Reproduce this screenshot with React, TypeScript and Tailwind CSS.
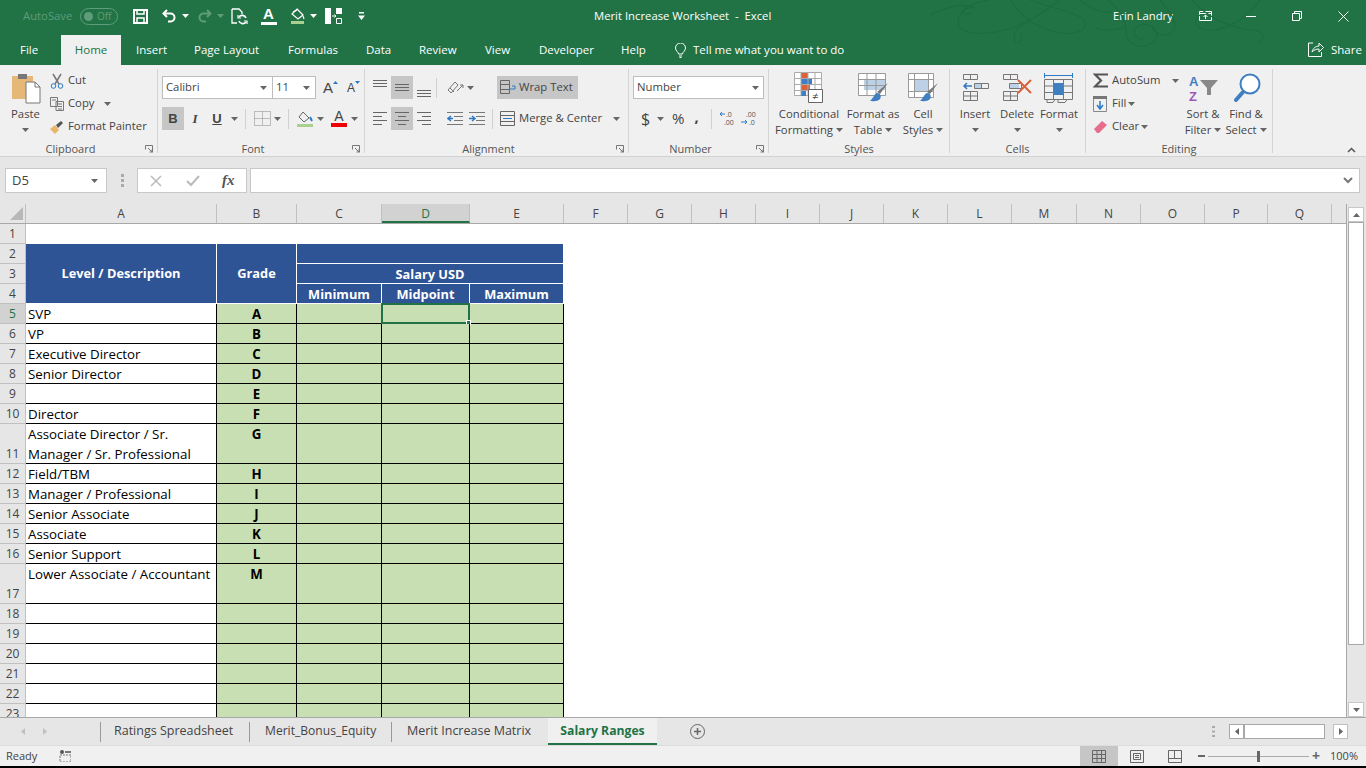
import type { ReactNode } from 'react';

const Chev = ({ c = '#666', className = '' }: { c?: string; className?: string }) => (
  <svg width="7" height="4" viewBox="0 0 7 4" className={className}><path d="M0 0h7L3.500 4z" fill={c} /></svg>
);

function Swirls() {
  return (
    <svg className="absolute left-[930px] top-0 pointer-events-none" width="340" height="65" viewBox="0 0 340 65" fill="none" stroke="#1d6c40" strokeWidth="1.200">
      <path d="M0 15C15 8 30 2 45 8C32 5 28 18 42 13" />
      <path d="M60 0C40 2 28 12 28 22C28 34 50 36 75 30C95 25 112 14 130 0" />
      <path d="M100 0C120 8 150 12 155 22C158 32 140 36 125 32C105 26 95 20 80 0" />
      <path d="M100 22C88 26 80 34 86 42C92 44 94 36 90 33" />
      <path d="M178 0C190 10 196 20 196 32C196 46 215 52 225 40C232 30 218 20 208 26C200 32 208 42 215 38" />
      <path d="M165 28C175 32 190 30 196 26" />
      <path d="M230 0C240 12 250 24 242 32C236 38 226 34 222 28" />
      <path d="M330 0C320 15 300 30 280 30C265 30 262 20 270 15" />
      <path d="M262 0C275 15 300 30 325 30C335 32 335 42 328 42" />
      <path d="M150 0C160 8 170 14 182 12" />
    </svg>
  );
}

function TitleBar() {
  return (
    <div className="h-[32px] flex items-center text-white relative text-[11.300px] whitespace-nowrap">
      <Swirls />
      <span className="ml-[23px] w-[49px] text-[#5f9c7b]">AutoSave</span>
      <span className="ml-[8px] w-[38px] h-[17px] rounded-full border border-[#5f9c7b] flex items-center px-[3px] gap-[4px]">
        <span className="w-[9px] h-[9px] rounded-full bg-[#5f9c7b]" />
        <span className="text-[10px] text-[#5f9c7b] leading-none">Off</span>
      </span>
      {/* save */}
      <svg className="ml-[15px]" width="15" height="15" viewBox="0 0 15 15" fill="none" stroke="#fff" strokeWidth="2"><path d="M1 1h13v13H1z" /><path d="M4 1v4h7V1M4 14V9h7v5" strokeWidth="1.500" /></svg>
      {/* undo */}
      <svg className="ml-[14px]" width="15" height="14" viewBox="0 0 15 14" fill="none" stroke="#fff" strokeWidth="2"><path d="M5 1 1.500 4.500 5 8" /><path d="M2 4.500h6.500a4 4 0 0 1 0 8H6" /></svg>
      <Chev c="#fff" className="ml-[5px]" />
      <svg className="ml-[9px]" width="14" height="14" viewBox="0 0 14 14" fill="none" stroke="#5f9c7b" strokeWidth="2"><path d="M9 1l3.500 3.500L9 8" /><path d="M12 4.500H5.500a4 4 0 0 0 0 8H8" /></svg>
      <Chev c="#5f9c7b" className="ml-[5px]" />
      {/* touch doc */}
      <svg className="ml-[7px]" width="17" height="17" viewBox="0 0 17 17" fill="none" stroke="#fff" strokeWidth="1.300"><path d="M1 1h7l3 3v2M1 1v14h5" /><path d="M15 10a4 4 0 0 0-7-1M8 13a4 4 0 0 0 7 1" strokeWidth="1.600" /><path d="M7 7v3h3M16 16v-3h-3" strokeWidth="1.200" /></svg>
      {/* font colour */}
      <span className="ml-[12px] w-[17px] flex flex-col items-center">
        <span className="text-[15px] leading-[13px] font-bold font-['Liberation_Sans',sans-serif]">A</span>
        <span className="w-[16px] h-[3px] bg-white mt-[2px]" />
      </span>
      {/* fill */}
      <svg className="ml-[13px]" width="16" height="16" viewBox="0 0 16 16" fill="none" stroke="#fff" strokeWidth="1.200"><path d="M7 1l6 6-5 4-6-5z" /><path d="M3 4l4-2M13 8l1 3" /><path d="M1 13h13v3H1z" fill="#a9d08e" stroke="none" /></svg>
      <Chev c="#fff" className="ml-[4px]" />
      {/* col width */}
      <svg className="ml-[8px]" width="17" height="16" viewBox="0 0 17 16"><path d="M0 0h6v16H0zM11 0h6v6h-6z" fill="#fff" /><path d="M11.500 10.500h5v5h-5z" fill="none" stroke="#fff" /><path d="M7 8h4M9.500 6.500 11 8 9.500 9.500" stroke="#fff" fill="none" /></svg>
      <svg className="ml-[16px]" width="7" height="8" viewBox="0 0 7 8"><path d="M1 0h5v1.500H1zM0 3.500h7L3.500 8z" fill="#fff" /></svg>
      <span className="ml-[229px] w-[176px] whitespace-pre">Merit Increase Worksheet  -  Excel</span>
      <span className="ml-[343px] w-[59px]">Erin Landry</span>
      <svg className="ml-[27px]" width="13" height="10" viewBox="0 0 13 10" fill="none" stroke="#fff"><path d="M.5.500h12v9H.5zM.5 2.500h12M6.500 8V4M4.500 6l2-2 2 2" /></svg>
      <span className="ml-[34px] w-[10px] h-px bg-white" />
      <svg className="ml-[36px]" width="10" height="10" viewBox="0 0 10 10" fill="none" stroke="#fff"><path d="M.5 2.500h7v7h-7zM2.500 2.500V.500h7v7h-2" /></svg>
      <svg className="ml-[36px]" width="11" height="11" viewBox="0 0 11 11" stroke="#fff"><path d="M.5.500l10 10M10.500.500l-10 10" /></svg>
    </div>
  );
}

function MenuRow() {
  return (
    <div className="h-[33px] flex items-end text-white text-[11.500px] relative whitespace-nowrap">
      <span className="ml-[20px] h-[24px] w-[18px]">File</span>
      <span className="ml-[23px] w-[60px] h-[30px] bg-[#f0f0f0] text-[#217346] text-center pt-[6px]">Home</span>
      <span className="ml-[15px] h-[24px] w-[29px]">Insert</span>
      <span className="ml-[29px] h-[24px] w-[65px]">Page Layout</span>
      <span className="ml-[29px] h-[24px] w-[49px]">Formulas</span>
      <span className="ml-[29px] h-[24px] w-[24px]">Data</span>
      <span className="ml-[29px] h-[24px] w-[37px]">Review</span>
      <span className="ml-[29px] h-[24px] w-[25px]">View</span>
      <span className="ml-[29px] h-[24px] w-[53px]">Developer</span>
      <span className="ml-[29px] h-[24px] w-[25px]">Help</span>
      <svg className="ml-[29px] mb-[7px]" width="11" height="15" viewBox="0 0 11 15" fill="none" stroke="#fff"><path d="M3.500 11c0-2-3-3-3-6a5 5 0 0 1 10 0c0 3-3 4-3 6zM4 13h3M4.500 14.500h2" /></svg>
      <span className="ml-[7px] h-[24px] w-[151px]">Tell me what you want to do</span>
      <svg className="ml-[464px] mb-[8px]" width="16" height="15" viewBox="0 0 16 15" fill="none" stroke="#fff"><path d="M5 1H.5v13.500h13V10" /><path d="M4 10c1-4 4-6 7-6V1l4.500 4.500L11 10V7c-3 0-5 1-7 3z" /></svg>
      <span className="ml-[7px] h-[24px]">Share</span>
    </div>
  );
}

function Group({ w, label, launcher, children }: { w: string; label: string; launcher?: boolean; children: ReactNode }) {
  return (
    <div className={`${w} flex flex-col h-[84px] mt-[4px] border-r border-[#d4d4d4] relative`}>
      <div className="h-[73px] flex">{children}</div>
      <div className={`text-[11px] h-[11px] leading-[14px] text-[#555] text-center ${launcher ? 'pr-[16px]' : ''}`}>{label}</div>
      {launcher && (
        <svg className="absolute right-[4px] bottom-0" width="8" height="8" viewBox="0 0 8 8" fill="none" stroke="#777"><path d="M.5.500h7v7M.5.500v4M3 3l4 4M4.500 7h2.500V4.500" /></svg>
      )}
    </div>
  );
}

function BigBtn({ w, icon, l1, l2, ml = '' }: { w: string; icon: ReactNode; l1: string; l2?: string; ml?: string }) {
  return (
    <div className={`${w} ${ml} flex flex-col items-center text-[11.300px] leading-[16px] text-[#444] whitespace-nowrap`}>
      <div className="h-[37px] flex items-center">{icon}</div>
      <span>{l1}</span>
      <span className="flex items-center gap-[3px] h-[15px]">{l2}<Chev /></span>
    </div>
  );
}

const PasteIcon = () => (
  <svg width="30" height="32" viewBox="0 0 30 32">
    <path d="M1 4h21v23H1z" fill="#e6b877" />
    <path d="M7 2h9v5H7z" fill="#777" />
    <path d="M15 10h9l5 5v16H15z" fill="#fff" stroke="#777" />
    <path d="M24 10v5h5" fill="none" stroke="#777" />
  </svg>
);

const AlignLines = ({ kind }: { kind: 'top' | 'mid' | 'bot' | 'l' | 'c' | 'r' }) => {
  const v = kind === 'top' ? [1, 4, 7] : kind === 'mid' ? [5, 8, 11] : kind === 'bot' ? [11, 14, 17] : null;
  if (v) {
    return (
      <svg width="14" height="18" viewBox="0 0 14 18" stroke="#666">
        {v.map((y) => <path key={y} d={`M0 ${y + 0.5}h14`} />)}
      </svg>
    );
  }
  const rows: [number, number][] = kind === 'l' ? [[0, 14], [0, 9], [0, 14], [0, 9]] : kind === 'c' ? [[0, 14], [3, 8], [0, 14], [3, 8]] : [[0, 14], [5, 9], [0, 14], [5, 9]];
  return (
    <svg width="14" height="13" viewBox="0 0 14 13" stroke="#666">
      {rows.map(([x, w], i) => <path key={i} d={`M${x} ${i * 4 + 0.5}h${w}`} />)}
    </svg>
  );
};

const Indent = ({ flip }: { flip?: boolean }) => (
  <svg width="16" height="13" viewBox="0 0 16 13" fill="none">
    <path d="M0 .5h16M7 4.500h9M7 8.500h9M0 12.500h16" stroke="#777" />
    <path d={flip ? 'M0 6.500h5M3 4l3 2.500L3 9' : 'M1 6.500h5M4 4 1 6.500 4 9'} stroke="#2b79c2" strokeWidth="1.500" />
  </svg>
);

function Ribbon() {
  return (
    <div className="h-[92px] bg-[#f0f0f0] border-b border-[#d2d2d2] flex relative">
      <Group w="w-[158px]" label="Clipboard" launcher>
        <div className="ml-[11px] w-[29px] flex flex-col items-center text-[11.300px] leading-[16px] text-[#444]">
          <div className="h-[37px] pt-[3px]"><PasteIcon /></div>
          <span>Paste</span>
          <span className="h-[15px] flex items-center"><Chev /></span>
        </div>
        <div className="ml-[10px] flex flex-col text-[11.300px] text-[#444] whitespace-nowrap">
          <div className="h-[23px] flex items-center">
            <svg width="14" height="16" viewBox="0 0 14 16" fill="none"><path d="M3 1l6 10M11 1 5 11" stroke="#777" strokeWidth="1.500" /><circle cx="3.500" cy="13" r="2.300" stroke="#2b79c2" /><circle cx="10.500" cy="13" r="2.300" stroke="#2b79c2" /></svg>
            <span className="ml-[4px]">Cut</span>
          </div>
          <div className="h-[23px] flex items-center">
            <svg width="14" height="14" viewBox="0 0 14 14" fill="none" stroke="#777"><path d="M.5.500h7v9h-7zM6 4.500h7.500v9H6zM2 3h4M8 7h4M8 9.500h4M8 12h4" /></svg>
            <span className="ml-[4px]">Copy</span>
            <Chev className="ml-[10px]" />
          </div>
          <div className="h-[23px] flex items-center">
            <svg width="14" height="14" viewBox="0 0 14 14"><path d="M0 9l5-4 4 5-4 4z" fill="#e9b568" /><path d="M6 5l5-4 2 2-5 5z" fill="#555" /></svg>
            <span className="ml-[4px]">Format Painter</span>
          </div>
        </div>
      </Group>

      <Group w="w-[207px]" label="Font" launcher>
        <div className="ml-[4px] flex flex-col pt-[7px] text-[#444] text-[11.300px]">
          <div className="h-[23px] flex items-center">
            <div className="w-[111px] h-[23px] bg-white border border-[#bdbdbd] flex items-center justify-between px-[3px] pr-[5px]">Calibri<Chev /></div>
            <div className="w-[43px] h-[23px] bg-white border border-l-0 border-[#bdbdbd] flex items-center justify-between px-[3px] pr-[5px]">11<Chev /></div>
            <span className="ml-[7px] text-[15px] font-['Liberation_Sans',sans-serif] leading-none">A</span>
            <svg className="mb-[10px]" width="5" height="3" viewBox="0 0 5 3"><path d="M0 3h5L2.500 0z" fill="#2b79c2" /></svg>
            <span className="ml-[9px] text-[12px] font-['Liberation_Sans',sans-serif] leading-none">A</span>
            <svg className="mb-[10px]" width="5" height="3" viewBox="0 0 5 3"><path d="M0 0h5L2.500 3z" fill="#2b79c2" /></svg>
          </div>
          <div className="h-[23px] mt-[8px] flex items-center font-['Liberation_Sans',sans-serif]">
            <span className="w-[22px] h-[23px] bg-[#c6c6c6] flex items-center justify-center font-bold text-[13px]">B</span>
            <span className="w-[22px] text-center italic font-bold text-[13px] font-['Liberation_Serif',serif]">I</span>
            <span className="w-[22px] text-center underline font-bold text-[13px]">U</span>
            <Chev className="ml-[3px]" />
            <span className="ml-[7px] w-px h-[20px] bg-[#d0d0d0]" />
            <svg className="ml-[8px]" width="17" height="15" viewBox="0 0 17 15" fill="none" stroke="#888" strokeDasharray="1 1"><path d="M.5.500h16v14H.5zM.5 7.500h16M8.500.500v14" /></svg>
            <Chev className="ml-[3px]" />
            <span className="ml-[7px] w-px h-[20px] bg-[#d0d0d0]" />
            <svg className="ml-[8px]" width="16" height="16" viewBox="0 0 16 16" fill="none"><path d="M6 1l6 6-5 4-5-5z" stroke="#666" /><path d="M13 6l2 4" stroke="#2b79c2" strokeWidth="2" /><path d="M0 13h16v3H0z" fill="#a9d08e" /></svg>
            <Chev className="ml-[4px]" />
            <span className="ml-[7px] w-[16px] flex flex-col items-center">
              <span className="text-[14px] leading-[12px]">A</span>
              <span className="w-[16px] h-[4px] bg-[#e00] mt-[1px]" />
            </span>
            <Chev className="ml-[4px]" />
          </div>
        </div>
      </Group>

      <Group w="w-[264px]" label="Alignment" launcher>
        <div className="ml-[4px] flex flex-col pt-[7px] text-[#444] text-[11.300px] whitespace-nowrap">
          <div className="h-[23px] flex items-center">
            <span className="ml-[4px] w-[14px] flex"><AlignLines kind="top" /></span>
            <span className="ml-[4px] w-[22px] h-[23px] bg-[#c6c6c6] flex items-center justify-center"><AlignLines kind="mid" /></span>
            <span className="ml-[4px] w-[14px] flex"><AlignLines kind="bot" /></span>
            <span className="ml-[5px] w-px h-[20px] bg-[#d0d0d0]" />
            <svg className="ml-[10px]" width="17" height="15" viewBox="0 0 17 15" fill="none" stroke="#777"><path d="M1 10 8 2l3 3-7 8zM10 11l6-6M13 5h3v3" /><path d="M3 8l4 4" /></svg>
            <Chev className="ml-[3px]" />
            <span className="ml-[23px] w-[81px] h-[23px] bg-[#c6c6c6] flex items-center pl-[3px] gap-[3px]">
              <svg width="16" height="15" viewBox="0 0 16 15" fill="none" stroke="#666"><path d="M.5.500h9v4h-9zM.5 4.500h9v5h-9zM.5 9.500h9v4h-9z" /><path d="M12 6h3v3h-6" stroke="#2b79c2" /></svg>
              Wrap Text
            </span>
          </div>
          <div className="h-[23px] mt-[8px] flex items-center">
            <span className="ml-[4px] w-[14px] flex"><AlignLines kind="l" /></span>
            <span className="ml-[4px] w-[22px] h-[23px] bg-[#c6c6c6] flex items-center justify-center"><AlignLines kind="c" /></span>
            <span className="ml-[4px] w-[14px] flex"><AlignLines kind="r" /></span>
            <span className="ml-[16px] flex"><Indent /></span>
            <span className="ml-[6px] flex"><Indent flip /></span>
            <span className="ml-[7px] w-px h-[20px] bg-[#d0d0d0]" />
            <svg className="ml-[7px]" width="15" height="15" viewBox="0 0 15 15" fill="none" stroke="#666"><path d="M.5.500h14v14H.5zM.5 4.500h14M.5 10.500h14" /><path d="M3 7.500h9" stroke="#2b79c2" /></svg>
            <span className="ml-[4px] w-[85px]">Merge &amp; Center</span>
            <Chev className="ml-[9px]" />
          </div>
        </div>
      </Group>

      <Group w="w-[140px]" label="Number" launcher>
        <div className="ml-[4px] flex flex-col pt-[7px] text-[#444] text-[11.300px]">
          <div className="w-[131px] h-[23px] bg-white border border-[#bdbdbd] flex items-center justify-between px-[3px] pr-[4px]">Number<Chev /></div>
          <div className="h-[23px] mt-[8px] flex items-center">
            <span className="ml-[8px] text-[16px] w-[9px]">$</span>
            <Chev className="ml-[7px]" />
            <span className="ml-[8px] text-[15px]">%</span>
            <span className="ml-[10px] text-[15px] font-bold leading-none mb-[4px]">,</span>
            <span className="ml-[12px] w-px h-[20px] bg-[#d0d0d0]" />
            <svg className="ml-[8px]" width="16" height="17" viewBox="0 0 16 17"><text x="6" y="7" fontSize="7" fill="#555">.0</text><text x="4" y="15" fontSize="7" fill="#555">.00</text><path d="M0 4h5M2 2 0 4l2 2" stroke="#2b79c2" fill="none" /></svg>
            <svg className="ml-[5px]" width="16" height="17" viewBox="0 0 16 17"><text x="5" y="7" fontSize="7" fill="#555">.00</text><text x="8" y="15" fontSize="7" fill="#555">.0</text><path d="M0 12h6M4 10l2 2-2 2" stroke="#2b79c2" fill="none" /></svg>
          </div>
        </div>
      </Group>

      <Group w="w-[181px]" label="Styles">
        <BigBtn w="w-[80px]" l1="Conditional" l2="Formatting" icon={
          <svg width="30" height="32" viewBox="0 0 30 32">
            <path d="M.5.500h27v23H.5z" fill="#fff" stroke="#aaa" />
            <path d="M7 1h7v5H7z" fill="#d9623a" /><path d="M7 7h11v5H7z" fill="#3f7fc1" /><path d="M7 13h9v5H7z" fill="#d9623a" /><path d="M7 19h5v5H7z" fill="#3f7fc1" />
            <path d="M7 .5v23M14 .5v23M21 .5v23M.5 6.500h27M.5 12.500h27M.5 18.500h27" stroke="#aaa" fill="none" />
            <path d="M14.500 17.500h14v13h-14z" fill="#fff" stroke="#666" />
            <text x="18" y="28" fontSize="11" fill="#444">≠</text>
          </svg>
        } />
        <BigBtn w="w-[48px]" l1="Format as" l2="Table" icon={
          <svg width="31" height="30" viewBox="0 0 31 30" fill="none">
            <path d="M.5.500h27v22H.5z" stroke="#999" fill="#fff" /><path d="M6 6h21v11H6z" fill="#bcd0e6" />
            <path d="M9 .5v22M18 .5v22M.5 6.500h27M.5 12.500h27" stroke="#999" />
            <path d="M30 10 22 21l-3-2z" fill="#777" /><path d="M19 20c3 0 5 3 3 6s-8 2-10 2c3-2 4-7 7-8z" fill="#3f7fc1" />
          </svg>
        } />
        <BigBtn w="w-[50px]" ml="ml-[1px]" l1="Cell" l2="Styles" icon={
          <svg width="31" height="30" viewBox="0 0 31 30" fill="none">
            <path d="M.5.500h25v24H.5z" stroke="#999" fill="#fff" /><path d="M6 6h14v12H6z" fill="#bcd0e6" />
            <path d="M.5 6.500h25M6.500.500v24M20.500.500v24M.5 18.500h25" stroke="#999" />
            <path d="M30 10 22 21l-3-2z" fill="#777" /><path d="M19 20c3 0 5 3 3 6s-8 2-10 2c3-2 4-7 7-8z" fill="#3f7fc1" />
          </svg>
        } />
      </Group>

      <Group w="w-[136px]" label="Cells">
        <BigBtn w="w-[42px]" ml="ml-[4px]" l1="Insert" icon={
          <svg width="27" height="28" viewBox="0 0 27 28" fill="none" stroke="#777">
            <path d="M1.500.500h14v5h-14zM8.500.500v5M1.500 17.500h14v9h-14zM1.500 22h14M8.500 17.500v9" />
            <path d="M12.500 9.500h14v5h-14zM19.500 9.500v5" /><path d="M13 10h6v4h-6z" fill="#bcd0e6" stroke="none" />
            <path d="M2 12h8M5 9l-3 3 3 3" stroke="#2b79c2" strokeWidth="1.500" />
          </svg>
        } />
        <BigBtn w="w-[42px]" l1="Delete" icon={
          <svg width="30" height="28" viewBox="0 0 30 28" fill="none" stroke="#777">
            <path d="M1.500.500h14v5h-14zM8.500.500v5M1.500 17.500h14v9h-14zM1.500 22h14M8.500 17.500v9M7.500 9.500h12v5h-12z" />
            <path d="M8 10h9v4H8z" fill="#bcd0e6" stroke="none" />
            <path d="M16 6l13 13M29 6 16 19" stroke="#d9623a" strokeWidth="2" />
          </svg>
        } />
        <BigBtn w="w-[42px]" l1="Format" icon={
          <svg width="30" height="32" viewBox="0 0 30 32" fill="none" stroke="#777">
            <path d="M.5 1v5M28.500 1v5M1 3.500h27" stroke="#2b79c2" />
            <path d="M.5 7.500h28v20H.5zM.5 14h28M.5 20.500h28M9.500 7.500v20M19.500 7.500v20" />
            <path d="M10 11h9v12h-9z" fill="#3f7fc1" stroke="none" />
            <path d="M3 27.500v3h6l2-3M14 27.500v3h7l2-3" />
          </svg>
        } />
      </Group>

      <Group w="w-[187px]" label="Editing">
        <div className="ml-[7px] w-[88px] flex flex-col text-[11.300px] text-[#444] whitespace-nowrap">
          <div className="h-[23px] flex items-center">
            <svg width="15" height="15" viewBox="0 0 15 15" fill="none" stroke="#555" strokeWidth="2.200"><path d="M15 1.500H2L8 7.500 2 13.500h13" /></svg>
            <span className="ml-[4px] w-[50px]">AutoSum</span>
            <Chev className="ml-[10px]" />
          </div>
          <div className="h-[23px] flex items-center">
            <svg width="15" height="16" viewBox="0 0 15 16" fill="none"><path d="M.5 2.500h13v13H.5z" stroke="#888" /><path d="M0 0h14v3H0z" fill="#777" /><path d="M7 5v8M4 9l3 4 3-4" stroke="#2b79c2" strokeWidth="1.500" /></svg>
            <span className="ml-[4px]">Fill</span>
            <Chev className="ml-[2px]" />
          </div>
          <div className="h-[23px] flex items-center">
            <svg width="15" height="14" viewBox="0 0 15 14"><path d="M1 9 9 1l5 4-8 8H4z" fill="#e86c8d" /></svg>
            <span className="ml-[4px]">Clear</span>
            <Chev className="ml-[2px]" />
          </div>
        </div>
        <BigBtn w="w-[44px]" l1="Sort &" l2="Filter" icon={
          <svg width="31" height="30" viewBox="0 0 31 30">
            <text x="1" y="13" fontSize="13" fontWeight="bold" fill="#3f7fc1" fontFamily="Liberation Sans">A</text>
            <text x="1" y="28" fontSize="13" fontWeight="bold" fill="#9b59b6" fontFamily="Liberation Sans">Z</text>
            <path d="M12 7h18l-7 8v7h-4v-7z" fill="#888" />
          </svg>
        } />
        <BigBtn w="w-[42px]" l1="Find &" l2="Select" icon={
          <svg width="28" height="30" viewBox="0 0 28 30" fill="none" className="ml-[2px]">
            <circle cx="17" cy="11" r="9.500" stroke="#3f7fc1" strokeWidth="2" fill="#fff" />
            <path d="M10 19 3 27" stroke="#3f7fc1" strokeWidth="4" strokeLinecap="round" />
          </svg>
        } />
      </Group>

      <svg className="absolute right-[10px] bottom-[3px]" width="9" height="6" viewBox="0 0 9 6" fill="none" stroke="#555" strokeWidth="1.500"><path d="M1 5l3.500-3.500L8 5" /></svg>
    </div>
  );
}

function FormulaBar() {
  return (
    <div className="h-[47px] bg-[#e6e6e6] flex items-start pt-[11px] text-[#444]">
      <div className="ml-[5px] w-[102px] h-[25px] bg-white border border-[#c8c8c8] flex items-center justify-between px-[6px] text-[13px]">
        D5<Chev className="mr-[2px]" />
      </div>
      <svg className="ml-[14px] mt-[6px]" width="3" height="13" viewBox="0 0 3 13" fill="#aaa"><path d="M0 0h3v3H0zM0 5h3v3H0zM0 10h3v3H0z" /></svg>
      <div className="ml-[13px] w-[110px] h-[25px] bg-white border border-[#c8c8c8] flex items-center">
        <svg className="ml-[12px]" width="12" height="12" viewBox="0 0 12 12" stroke="#bbb" strokeWidth="1.500"><path d="M1 1l10 10M11 1 1 11" /></svg>
        <svg className="ml-[24px]" width="14" height="12" viewBox="0 0 14 12" fill="none" stroke="#bbb" strokeWidth="2"><path d="M1 6l4 4 8-9" /></svg>
        <span className="ml-[22px] text-[15px] italic font-bold font-['Liberation_Serif',serif] text-[#555]">fx</span>
      </div>
      <div className="ml-[3px] w-[1110px] h-[25px] bg-white border border-[#c8c8c8] flex items-center justify-end pr-[6px]">
        <svg width="10" height="7" viewBox="0 0 10 7" fill="none" stroke="#777" strokeWidth="2"><path d="M1 1l4 4 4-4" /></svg>
      </div>
    </div>
  );
}

const COLS = [
  ['A', 'w-[191px]'], ['B', 'w-[80px]'], ['C', 'w-[85px]'], ['D', 'w-[88px]'], ['E', 'w-[94px]'],
  ['F', 'w-[64px]'], ['G', 'w-[64px]'], ['H', 'w-[64px]'], ['I', 'w-[64px]'], ['J', 'w-[64px]'],
  ['K', 'w-[64px]'], ['L', 'w-[64px]'], ['M', 'w-[65px]'], ['N', 'w-[64px]'], ['O', 'w-[64px]'],
  ['P', 'w-[63px]'], ['Q', 'w-[64px]'],
];

const ROWS: { n: number; label?: string; grade?: string; tall?: boolean }[] = [
  { n: 5, label: 'SVP', grade: 'A' },
  { n: 6, label: 'VP', grade: 'B' },
  { n: 7, label: 'Executive Director', grade: 'C' },
  { n: 8, label: 'Senior Director', grade: 'D' },
  { n: 9, grade: 'E' },
  { n: 10, label: 'Director', grade: 'F' },
  { n: 11, label: 'Associate Director / Sr. Manager / Sr. Professional', grade: 'G', tall: true },
  { n: 12, label: 'Field/TBM', grade: 'H' },
  { n: 13, label: 'Manager / Professional', grade: 'I' },
  { n: 14, label: 'Senior Associate', grade: 'J' },
  { n: 15, label: 'Associate', grade: 'K' },
  { n: 16, label: 'Senior Support', grade: 'L' },
  { n: 17, label: 'Lower Associate / Accountant', grade: 'M', tall: true },
  { n: 18 }, { n: 19 }, { n: 20 }, { n: 21 }, { n: 22 }, { n: 23 },
];

const rowHead = 'flex items-end justify-center border-r border-b border-[#c0c0c0] text-[12px] leading-[19px]';
const rowIdle = 'bg-[#e6e6e6] text-[#444]';
const rowActive = 'bg-[#d2d2d2] text-[#217346]';
const hdr = 'bg-[#2f5496] text-white font-bold text-[12.800px] flex items-center justify-center border-r border-b border-white';

function Sheet() {
  return (
    <div className="flex-1 min-w-0 flex flex-col overflow-hidden">
      <div className="h-[20px] flex bg-[#e6e6e6] border-b border-[#a8a8a8] text-[12px] text-[#444] shrink-0">
        <div className="w-[26px] border-r border-[#c0c0c0] relative">
          <svg className="absolute right-[2px] bottom-[3px]" width="13" height="13" viewBox="0 0 13 13"><path d="M13 0v13H0z" fill="#b8b8b8" /></svg>
        </div>
        {COLS.map(([c, w]) => (
          <div key={c} className={`${w} shrink-0 text-center leading-[19px] border-r border-[#c0c0c0] ${c === 'D' ? 'bg-[#d2d2d2] border-b-2 border-b-[#217346] text-[#217346]' : ''}`}>{c}</div>
        ))}
      </div>
      <div className="flex-1 bg-white grid grid-cols-[26px_191px_80px_85px_88px_94px_1fr] auto-rows-[20px] text-[13.300px] text-black relative">
        <div className={`${rowHead} ${rowIdle}`}>1</div>
        <div className="col-span-6" />

        <div className={`${rowHead} ${rowIdle}`}>2</div>
        <div className={`${hdr} row-span-3`}>Level / Description</div>
        <div className={`${hdr} row-span-3`}>Grade</div>
        <div className={`${hdr} col-span-3`} />
        <div />

        <div className={`${rowHead} ${rowIdle}`}>3</div>
        <div className={`${hdr} col-span-3 pt-[2px]`}>Salary USD</div>
        <div />

        <div className={`${rowHead} ${rowIdle}`}>4</div>
        <div className={`${hdr} pt-[2px]`}>Minimum</div>
        <div className={`${hdr} pt-[2px]`}>Midpoint</div>
        <div className={`${hdr} pt-[2px]`}>Maximum</div>
        <div />

        {ROWS.map((r) => (
          <div key={r.n} className="contents">
            <div className={`${rowHead} ${r.tall ? 'row-span-2' : ''} ${r.n === 5 ? rowActive : rowIdle}`}>{r.n}</div>
            <div className={`${r.tall ? 'row-span-2' : ''} border-r border-b border-black px-[2px] leading-[20px]`}>{r.label}</div>
            <div className={`${r.tall ? 'row-span-2' : ''} border-r border-b border-black bg-[#c8dfb3] text-center font-bold leading-[20px]`}>{r.grade}</div>
            <div className={`${r.tall ? 'row-span-2' : ''} border-r border-b border-black bg-[#c8dfb3]`} />
            <div className={`${r.tall ? 'row-span-2' : ''} border-r border-b border-black bg-[#c8dfb3] relative`}>
              {r.n === 5 && (
                <div className="absolute -left-px -top-px -right-px -bottom-px border-2 border-[#217346]">
                  <span className="absolute -right-[3px] -bottom-[3px] w-[5px] h-[5px] bg-[#217346] border border-white" />
                </div>
              )}
            </div>
            <div className={`${r.tall ? 'row-span-2' : ''} border-r border-b border-black bg-[#c8dfb3]`} />
            <div className={r.tall ? 'row-span-2' : ''} />
          </div>
        ))}
      </div>
    </div>
  );
}

function VScroll() {
  return (
    <div className="w-[19px] shrink-0 bg-[#e6e6e6] border-l border-[#a8a8a8] flex flex-col items-center pt-[3px] pb-0">
      <div className="w-[16px] h-[15px] bg-white border border-[#c8c8c8] flex items-center justify-center">
        <svg width="7" height="4" viewBox="0 0 7 4"><path d="M0 4h7L3.500 0z" fill="#666" /></svg>
      </div>
      <div className="w-[16px] h-[423px] bg-white border border-[#a8a8a8]" />
      <div className="flex-1" />
      <div className="w-[16px] h-[15px] bg-white border border-[#c8c8c8] flex items-center justify-center">
        <Chev />
      </div>
    </div>
  );
}

function TabBar() {
  return (
    <div className="h-[28px] bg-[#e6e6e6] border-t border-[#a8a8a8] flex items-center text-[12.500px] text-[#444] whitespace-nowrap">
      <svg className="ml-[21px]" width="4" height="7" viewBox="0 0 4 7"><path d="M4 0v7L0 3.500z" fill="#c0c0c0" /></svg>
      <svg className="ml-[18px]" width="4" height="7" viewBox="0 0 4 7"><path d="M0 0v7l4-3.500z" fill="#c0c0c0" /></svg>
      <span className="ml-[53px] w-px h-[20px] bg-[#999]" />
      <span className="ml-[13px] w-[120px]">Ratings Spreadsheet</span>
      <span className="ml-[15px] w-px h-[20px] bg-[#999]" />
      <span className="ml-[15px] w-[111px] text-[12.100px]">Merit_Bonus_Equity</span>
      <span className="ml-[15px] w-px h-[20px] bg-[#999]" />
      <span className="ml-[15px] w-[125px]">Merit Increase Matrix</span>
      <span className="ml-[16px] w-[109px] h-[27px] bg-[#f0f0f0] border-b-2 border-[#217346] text-[#217346] font-bold text-center leading-[26px] text-[12.200px]">Salary Ranges</span>
      <svg className="ml-[33px]" width="15" height="15" viewBox="0 0 15 15" fill="none" stroke="#666"><circle cx="7.500" cy="7.500" r="7" /><path d="M4 7.500h7M7.500 4v7" strokeWidth="1.500" /></svg>
      <svg className="ml-[507px]" width="3" height="11" viewBox="0 0 3 11" fill="#aaa"><path d="M0 0h3v2H0zM0 4.500h3v2H0zM0 9h3v2H0z" /></svg>
      <div className="ml-[14px] w-[96px] h-[15px] bg-white border border-[#a8a8a8] flex items-center">
        <span className="w-[15px] h-full border-r-2 border-[#a8a8a8] flex items-center justify-center">
          <svg width="4" height="7" viewBox="0 0 4 7"><path d="M4 0v7L0 3.500z" fill="#666" /></svg>
        </span>
      </div>
      <div className="ml-[8px] w-[15px] h-[15px] bg-white border border-[#c0c0c0] flex items-center justify-center">
        <svg width="4" height="7" viewBox="0 0 4 7"><path d="M0 0v7l4-3.500z" fill="#666" /></svg>
      </div>
    </div>
  );
}

function StatusBar() {
  return (
    <div className="h-[21px] bg-[#f0f0f0] flex items-center text-[11px] text-[#444] border-t border-[#dcdcdc]">
      <span className="ml-[6px] w-[32px]">Ready</span>
      <svg className="ml-[21px]" width="12" height="12" viewBox="0 0 12 12"><circle cx="3" cy="2" r="2" fill="#555" /><path d="M6 1h6v2H6z" fill="#777" /><path d="M1 5h11v7H1z" fill="none" stroke="#777" strokeDasharray="2 1" /></svg>
      <span className="ml-[1009px] w-[38px] h-[21px] bg-[#c6c6c6] flex items-center justify-center">
        <svg width="14" height="13" viewBox="0 0 14 13" fill="none" stroke="#666"><path d="M.5.500h13v12H.5zM.5 4.500h13M.5 8.500h13M5 .5v12M9.500.500v12" /></svg>
      </span>
      <svg className="ml-[12px]" width="14" height="13" viewBox="0 0 14 13" fill="none" stroke="#666"><path d="M.5.500h13v12H.5zM3.500 3.500h7v6h-7zM5 5.500h4M5 7.500h4" /></svg>
      <svg className="ml-[24px]" width="14" height="13" viewBox="0 0 14 13" fill="none" stroke="#666"><path d="M.5.500h13v12H.5zM.5 8.500h13M6.500.500v8" /></svg>
      <span className="ml-[16px] w-[7px] h-[2px] bg-[#666]" />
      <span className="ml-[3px] w-[101px] h-px bg-[#aaa] flex items-center justify-center">
        <span className="w-[3px] h-[11px] bg-[#666]" />
      </span>
      <span className="ml-[3px] text-[14px] font-bold leading-none text-[#666]">+</span>
      <span className="ml-[10px]">100%</span>
    </div>
  );
}

export default function App() {
  return (
    <div className="w-[1366px] h-[768px] overflow-hidden flex flex-col bg-[#217346] font-['Open_Sans','Noto_Sans',sans-serif]">
      <TitleBar />
      <MenuRow />
      <Ribbon />
      <FormulaBar />
      <div className="h-[513px] flex bg-[#e6e6e6] pr-[1px]">
        <Sheet />
        <VScroll />
      </div>
      <TabBar />
      <StatusBar />
      <div className="h-[2px] bg-black" />
    </div>
  );
}
